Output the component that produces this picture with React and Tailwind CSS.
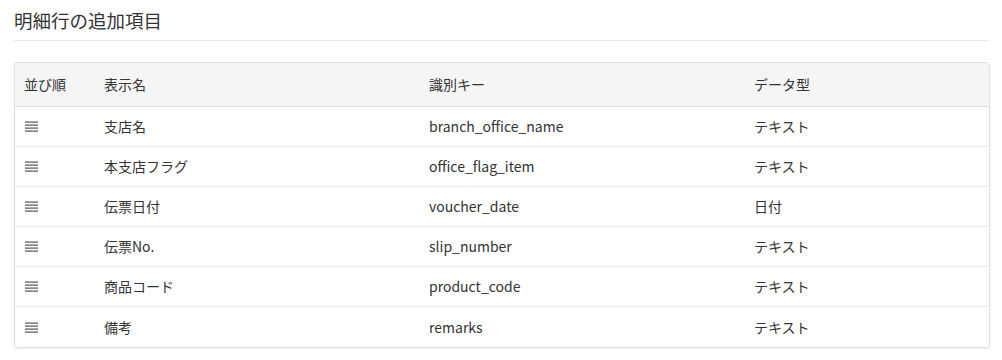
import React from 'react'

const rows = [
  { name: '支店名', key: 'branch_office_name', type: 'テキスト' },
  { name: '本支店フラグ', key: 'office_flag_item', type: 'テキスト' },
  { name: '伝票日付', key: 'voucher_date', type: '日付' },
  { name: '伝票No.', key: 'slip_number', type: 'テキスト' },
  { name: '商品コード', key: 'product_code', type: 'テキスト' },
  { name: '備考', key: 'remarks', type: 'テキスト' },
]

function DragHandle() {
  return (
    <svg width="13" height="11" viewBox="0 0 13 11" className="text-[#555]">
      <rect x="0" y="0.5" width="13" height="1.2" fill="currentColor" />
      <rect x="0" y="3.5" width="13" height="1.2" fill="currentColor" />
      <rect x="0" y="6.5" width="13" height="1.2" fill="currentColor" />
      <rect x="0" y="9.5" width="13" height="1.2" fill="currentColor" />
    </svg>
  )
}

function App() {
  return (
    <div className="w-[1002px] h-[360px] bg-white px-[14px] pt-[7px] text-[#333]" style={{ fontFamily: '"Noto Sans CJK JP", "Noto Sans", sans-serif' }}>
      <h2 className="text-[18.5px] leading-[26px] pb-[7px] border-b border-[#ebebeb] w-[976px]">明細行の追加項目</h2>
      <div className="mt-[21px] w-[976px] border border-[#e0e0e0] rounded-[3px] shadow-[0_1px_2px_rgba(0,0,0,0.08)] overflow-hidden text-[14px]">
        <div className="grid grid-cols-[80px_325px_325px_1fr] h-[44px] items-center bg-[#f5f5f5] border-b border-[#dedede] px-[9px]">
          <div>並び順</div>
          <div>表示名</div>
          <div>識別キー</div>
          <div>データ型</div>
        </div>
        {rows.map((r, i) => (
          <div key={r.key} className={`grid grid-cols-[80px_325px_325px_1fr] h-[40px] items-center px-[9px] ${i < rows.length - 1 ? 'border-b border-[#ebebeb]' : ''}`}>
            <div className="pl-[1px]"><DragHandle /></div>
            <div>{r.name}</div>
            <div>{r.key}</div>
            <div>{r.type}</div>
          </div>
        ))}
      </div>
    </div>
  )
}

export default App
